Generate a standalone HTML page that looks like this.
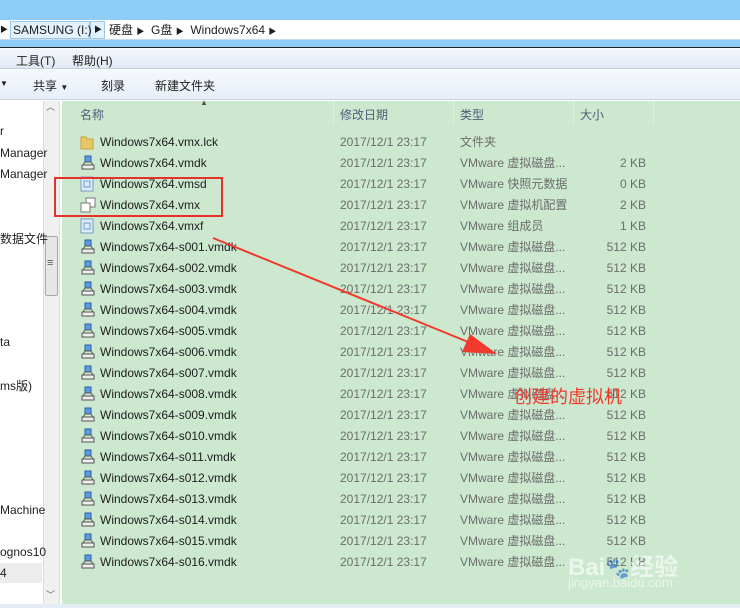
<!DOCTYPE html>
<html><head><meta charset="utf-8"><style>
*{margin:0;padding:0;box-sizing:border-box}
body{width:740px;height:608px;overflow:hidden;background:#fff;font-family:"Liberation Sans","Noto Sans CJK SC",sans-serif;font-size:12px;color:#1e1e1e;position:relative}
.a{position:absolute;white-space:nowrap}
.row{position:absolute;left:0;height:21px;line-height:21px;width:740px}
.row span{position:absolute}
.g{color:#6d6d6d}
</style></head><body>
<div class="a" style="left:0;top:0;width:740px;height:20px;background:#8dcdf8"></div>
<div class="a" style="left:0;top:20px;width:740px;height:20px;background:#fff;border-bottom:1px solid #c9dbe9"></div>
<div class="a" style="left:0;top:40px;width:740px;height:8px;background:#8dcdf8;border-bottom:1px solid #222"></div>
<div class="a" style="left:10px;top:21px;width:80px;height:18px;background:#e2f1fc;border:1px solid #9cc8e8"></div>
<div class="a" style="left:90px;top:21px;width:15px;height:18px;background:#e2f1fc;border:1px solid #9cc8e8"></div>
<div class="a" style="left:0;top:25px;font-size:8px;line-height:10px">▶</div>
<div class="a" style="left:13px;top:22px;line-height:16px">SAMSUNG (I:)</div>
<div class="a" style="left:94px;top:25px;font-size:8px;line-height:10px">▶</div>
<div class="a" style="left:109px;top:22px;line-height:16px">硬盘 <span style="font-size:8px">▶</span> &nbsp;G盘 <span style="font-size:8px">▶</span> &nbsp;Windows7x64 <span style="font-size:8px">▶</span></div>
<div class="a" style="left:0;top:49px;width:740px;height:20px;background:linear-gradient(#f4f7fc,#e2e9f4);border-bottom:1px solid #c4cfde"></div>
<div class="a" style="left:16px;top:52px">工具(T)</div>
<div class="a" style="left:72px;top:52px">帮助(H)</div>
<div class="a" style="left:0;top:70px;width:740px;height:30px;background:linear-gradient(#f5f8fd,#e8eef8);border-bottom:1px solid #c9d3e0"></div>
<div class="a" style="left:0;top:79px;font-size:8px">▼</div>
<div class="a" style="left:33px;top:77px">共享 <span style="font-size:8px">▼</span></div>
<div class="a" style="left:101px;top:77px">刻录</div>
<div class="a" style="left:155px;top:77px">新建文件夹</div>
<div class="a" style="left:43px;top:101px;width:17px;height:503px;background:#f0f0f0;border-left:1px solid #ddd;border-right:1px solid #ddd"></div>
<div class="a" style="left:46px;top:100px;font-size:9px;color:#666">︿</div>
<div class="a" style="left:45px;top:236px;width:13px;height:60px;background:#e6e6e6;border:1px solid #aaa;border-radius:2px"></div>
<div class="a" style="left:47px;top:257px;font-size:11px;color:#555">≡</div>
<div class="a" style="left:46px;top:588px;font-size:9px;color:#666">﹀</div>
<div class="a" style="left:0;top:563px;width:42px;height:20px;background:#ececec"></div>
<div class="a" style="left:0;top:124px">r</div>
<div class="a" style="left:0;top:146px">Manager</div>
<div class="a" style="left:0;top:167px">Manager</div>
<div class="a" style="left:0;top:230px">数据文件</div>
<div class="a" style="left:0;top:335px">ta</div>
<div class="a" style="left:0;top:377px">ms版)</div>
<div class="a" style="left:0;top:503px">Machine</div>
<div class="a" style="left:0;top:545px">ognos10</div>
<div class="a" style="left:0;top:566px">4</div>
<div class="a" style="left:62px;top:101px;width:678px;height:503px;background:#cce8cf"></div>
<div class="a" style="left:0;top:604px;width:740px;height:4px;background:#e4ecf6"></div>
<div class="a" style="left:333px;top:101px;width:1px;height:22px;background:#e4efe5"></div>
<div class="a" style="left:453px;top:101px;width:1px;height:22px;background:#e4efe5"></div>
<div class="a" style="left:573px;top:101px;width:1px;height:22px;background:#e4efe5"></div>
<div class="a" style="left:653px;top:101px;width:1px;height:22px;background:#e4efe5"></div>
<div class="a" style="left:200px;top:98px;font-size:8px;color:#555">▲</div>
<div class="a g" style="left:80px;top:106px;color:#4c607a">名称</div>
<div class="a g" style="left:340px;top:106px;color:#4c607a">修改日期</div>
<div class="a g" style="left:460px;top:106px;color:#4c607a">类型</div>
<div class="a g" style="left:580px;top:106px;color:#4c607a">大小</div>
<div id="rows"></div>
<script>
var r=[["Windows7x64.vmx.lck","文件夹","",0],["Windows7x64.vmdk","VMware 虚拟磁盘...","2 KB",1],["Windows7x64.vmsd","VMware 快照元数据","0 KB",2],["Windows7x64.vmx","VMware 虚拟机配置","2 KB",3],["Windows7x64.vmxf","VMware 组成员","1 KB",2]];
for(var i=1;i<=16;i++)r.push(["Windows7x64-s0"+(i<10?"0":"")+i+".vmdk","VMware 虚拟磁盘...","512 KB",1]);
var ic=['<svg width="14" height="16"><path d="M1 3h5l1 2h6v10H1z" fill="#e8c866" stroke="#c9a03a"/></svg>',
'<svg width="16" height="16"><rect x="5" y="1" width="6" height="6" fill="#5b9be0" stroke="#2b5ea8"/><path d="M2 10h12v4H2z" fill="#eee" stroke="#555"/><path d="M3 10l2-3h6l2 3" fill="none" stroke="#555"/></svg>',
'<svg width="14" height="16"><rect x="1" y="1" width="12" height="14" fill="#dfeaf6" stroke="#7a9cc4"/><rect x="4" y="5" width="6" height="6" fill="none" stroke="#6a9fd8"/></svg>',
'<svg width="16" height="16"><rect x="6" y="1" width="9" height="9" fill="#fff" stroke="#777"/><rect x="1" y="6" width="9" height="9" fill="#fff" stroke="#777"/></svg>'];
var h="";r.forEach(function(x,k){var y=132+k*21;h+='<div class="row" style="top:'+y+'px"><span style="left:80px;top:2px;line-height:0">'+ic[x[3]]+'</span><span style="left:100px">'+x[0]+'</span><span class="g" style="left:340px">2017/12/1 23:17</span><span class="g" style="left:460px">'+x[1]+'</span><span class="g" style="right:94px">'+x[2]+'</span></div>'});
document.getElementById("rows").innerHTML=h;
</script>
<div class="a" style="left:54px;top:177px;width:169px;height:40px;border:2px solid #e8302a"></div>
<svg class="a" style="left:0;top:0" width="740" height="608"><line x1="213" y1="238" x2="478" y2="346" stroke="#f03a2e" stroke-width="2"/><polygon points="497,354 470,334 462,352" fill="#f03a2e"/></svg>
<div class="a" style="left:514px;top:383px;font-size:18px;color:#f03a2e">创建的虚拟机</div>
<div class="a" style="left:568px;top:547px;font-size:24px;font-weight:bold;color:rgba(255,255,255,.6)">Bai<span style="font-size:20px">🐾</span>经验</div>
<div class="a" style="left:568px;top:575px;font-size:13px;color:rgba(255,255,255,.6)">jingyan.baidu.com</div>
</body></html>
